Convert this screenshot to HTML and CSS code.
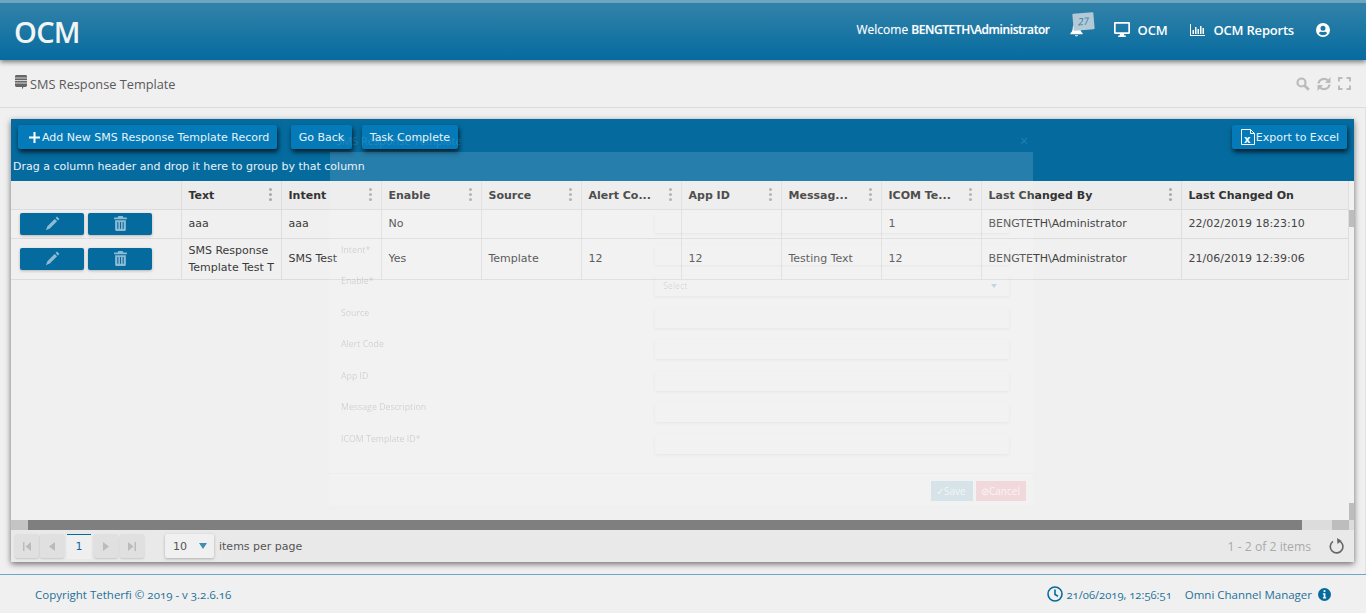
FILE: index.html
```html
<!DOCTYPE html>
<html lang="en">
<head>
<meta charset="utf-8">
<title>SMS Response Template</title>
<link rel="stylesheet" href="styles.css">
</head>
<body>
<div class="page">
  <header class="topbar">
    <div class="logo">OCM</div>
    <nav class="topnav">
      <span class="welcome">Welcome <b>BENGTETH\Administrator</b></span>
      <span class="bell">
        <svg class="bell-icon" viewBox="0 0 16 16" width="15" height="15"><path fill="#fff" d="M8 1c-.6 0-1 .4-1 1C4.800 2.500 4 4.300 4 6c0 3-1 4.500-2.500 5.700V13h13v-1.300C13 10.500 12 9 12 6c0-1.700-.8-3.500-3-4 0-.6-.4-1-1-1zM6.300 14c.2.800.9 1.300 1.700 1.300s1.500-.5 1.700-1.300z"/></svg>
        <span class="badge">27</span>
      </span>
      <a class="navlink"><svg viewBox="0 0 16 15" width="16" height="15"><path fill="#fff" fill-rule="evenodd" d="M1.200 0h13.600c.7 0 1.200.5 1.200 1.200v9.600c0 .7-.5 1.200-1.200 1.200H10l.4 1.600h1.400V15H4.200v-1.400h1.400L6 12H1.200C.5 12 0 11.500 0 10.800V1.200C0 .5.500 0 1.200 0zM1.700 1.700v8.600h12.600V1.700z"/></svg><span>OCM</span></a>
      <a class="navlink"><svg viewBox="0 0 15 12" width="15" height="12"><path fill="#fff" d="M0 0h1v11h14v1H0zM2.500 6h1.500v4H2.500zM5 3h1.500v7H5zM7.500 5H9v5H7.500zM10 2h1.500v8H10zM12.500 4H14v6h-1.500z"/></svg><span>OCM Reports</span></a>
      <svg class="user" viewBox="0 0 14 14" width="14" height="14"><path fill="#fff" fill-rule="evenodd" d="M7 0a7 7 0 1 0 0 14A7 7 0 0 0 7 0zm0 2.800a2.500 2.500 0 1 1 0 5 2.500 2.500 0 0 1 0-5zM7 12.300c-1.700 0-3.200-.8-4.100-2 .4-1 1.400-1.500 2.300-1.500.6.200 1.200.3 1.800.3s1.200-.1 1.800-.3c.9 0 1.900.5 2.300 1.500-.9 1.200-2.400 2-4.100 2z"/></svg>
    </nav>
  </header>

  <section class="titlebar">
    <h1 class="page-title">
      <svg viewBox="0 0 12 15" width="12" height="15"><path fill="#666" d="M1.500 0h9c.8 0 1.500.6 1.500 1.400v9.200c0 .8-.7 1.400-1.500 1.400H8.500L7 14.500V12H1.500C.7 12 0 11.400 0 10.600V1.400C0 .6.700 0 1.500 0z"/><path stroke="#f0f0f0" stroke-width=".8" d="M0 3h12M0 5.500h12M0 8h12"/></svg>
      SMS Response Template
    </h1>
    <div class="tools">
      <svg viewBox="0 0 14 14" width="14" height="14"><circle cx="5.500" cy="5.500" r="4" fill="none" stroke="#bbb" stroke-width="2.200"/><path d="M8.500 8.500l4.300 4.300" stroke="#bbb" stroke-width="2.800"/></svg>
      <svg viewBox="0 0 14 14" width="14" height="14"><path fill="none" stroke="#bbb" stroke-width="2.200" d="M1.500 6.500A5.500 5 0 0 1 11 3.500M12.500 7.500A5.500 5 0 0 1 3 10.500"/><path fill="#bbb" d="M13.500 0v6H8zM.5 14V8H6z"/></svg>
      <svg viewBox="0 0 13 13" width="13" height="13"><path fill="none" stroke="#bbb" stroke-width="2" d="M1 4.500V1h3.500M8.500 1H12v3.500M12 8.500V12H8.500M4.500 12H1V8.500"/></svg>
    </div>
  </section>

  <main class="content">
    <div class="panel">
      <div class="toolbar">
        <div class="toolbar-row">
          <div class="btn-group">
            <button class="tbtn tbtn-add"><svg viewBox="0 0 11 11" width="11" height="11"><path fill="#fff" d="M4.500 0h2v4.500H11v2H6.500V11h-2V6.500H0v-2h4.500z"/></svg>Add New SMS Response Template Record</button>
            <button class="tbtn tbtn-back">Go Back</button>
            <button class="tbtn">Task Complete</button>
          </div>
          <button class="tbtn tbtn-export"><svg viewBox="0 0 14 16" width="14" height="16"><path fill="none" stroke="#fff" stroke-width="1" d="M.5.500h9l4 4v11H.5z"/><path fill="none" stroke="#fff" d="M9.500.5v4h4"/><text x="3" y="14" class="xl">x</text></svg>Export to Excel</button>
        </div>
        <div class="grouping">Drag a column header and drop it here to group by that column</div>
      </div>

      <div class="grid-wrap">
        <table class="grid">
          <colgroup>
            <col class="c-act"><col class="c-n"><col class="c-n"><col class="c-n"><col class="c-n"><col class="c-n"><col class="c-n"><col class="c-n"><col class="c-n"><col class="c-by"><col>
          </colgroup>
          <thead>
            <tr>
              <th></th>
              <th>Text<i class="dots"></i></th>
              <th>Intent<i class="dots"></i></th>
              <th>Enable<i class="dots"></i></th>
              <th>Source<i class="dots"></i></th>
              <th>Alert Co...<i class="dots"></i></th>
              <th>App ID<i class="dots"></i></th>
              <th>Messag...<i class="dots"></i></th>
              <th>ICOM Te...<i class="dots"></i></th>
              <th>Last Changed By<i class="dots"></i></th>
              <th>Last Changed On</th>
            </tr>
          </thead>
          <tbody>
            <tr class="r1">
              <td class="acts"><div class="act-wrap"><button class="act"><svg viewBox="0 0 15 15" width="15" height="15"><path fill="#8dbbd4" d="M12 .6l2.400 2.400-1.400 1.400-2.400-2.400zM9.700 2.900l2.400 2.400-7.300 7.300L.8 14.200l1.600-4z"/></svg></button><button class="act"><svg viewBox="0 0 12 14" width="13" height="15"><path fill="#8dbbd4" fill-rule="evenodd" d="M4 0h4l.7 1.500H12V3H0V1.500h3.300zM1 4h10v8.500c0 .8-.6 1.500-1.300 1.500H2.300C1.600 14 1 13.300 1 12.500zM3 5.500V12h1V5.500zm2.500 0V12h1V5.500zm2.500 0V12h1V5.500z"/></svg></button></div></td>
              <td>aaa</td><td>aaa</td><td class="muted">No</td><td></td><td></td><td></td><td></td><td class="muted">1</td><td class="muted">BENGTETH\Administrator</td><td class="muted">22/02/2019 18:23:10</td>
            </tr>
            <tr class="r2">
              <td class="acts"><div class="act-wrap"><button class="act"><svg viewBox="0 0 15 15" width="15" height="15"><path fill="#8dbbd4" d="M12 .6l2.400 2.400-1.400 1.400-2.400-2.400zM9.700 2.900l2.400 2.400-7.300 7.300L.8 14.200l1.600-4z"/></svg></button><button class="act"><svg viewBox="0 0 12 14" width="13" height="15"><path fill="#8dbbd4" fill-rule="evenodd" d="M4 0h4l.7 1.500H12V3H0V1.500h3.300zM1 4h10v8.500c0 .8-.6 1.500-1.300 1.500H2.300C1.600 14 1 13.300 1 12.500zM3 5.500V12h1V5.500zm2.500 0V12h1V5.500zm2.500 0V12h1V5.500z"/></svg></button></div></td>
              <td class="wrap">SMS Response Template Test T</td><td>SMS Test</td><td class="muted">Yes</td><td class="muted">Template</td><td class="muted">12</td><td class="muted">12</td><td class="muted">Testing Text</td><td class="muted">12</td><td class="muted">BENGTETH\Administrator</td><td class="muted">21/06/2019 12:39:06</td>
            </tr>
          </tbody>
        </table>
        <div class="vscroll"><span class="vthumb"></span><span class="vthumb"></span></div>
      </div>

      <div class="hscroll"><span class="hleft"></span><span class="hthumb"></span><span class="hrest"></span><span class="hcorner"></span></div>

      <div class="pager">
        <div class="pager-left">
          <button class="pg"><svg viewBox="0 0 8 9" width="8" height="9"><path fill="#bbb" d="M0 0h1.500v9H0zM8 0v9L2.500 4.500z"/></svg></button>
          <button class="pg"><svg viewBox="0 0 6 9" width="6" height="9"><path fill="#bbb" d="M6 0v9L0 4.500z"/></svg></button>
          <span class="pg-cur">1</span>
          <button class="pg"><svg viewBox="0 0 6 9" width="6" height="9"><path fill="#bbb" d="M0 0v9l6-4.500z"/></svg></button>
          <button class="pg"><svg viewBox="0 0 8 9" width="8" height="9"><path fill="#bbb" d="M6.500 0H8v9H6.500zM0 0v9l5.500-4.500z"/></svg></button>
          <span class="size-sel"><span>10</span><i class="caret"></i></span>
          <span class="ipp">items per page</span>
        </div>
        <div class="pager-right">
          <span class="count">1 - 2 of 2 items</span>
          <svg viewBox="0 0 16 16" width="16" height="16"><path fill="none" stroke="#666" stroke-width="1.600" d="M9.800 2.700A6.300 6.300 0 1 1 4 3.400"/><path fill="#666" d="M8 0l4.500 2.800L8.500 6z"/></svg>
        </div>
      </div>
    </div>
  </main>

  <footer class="footer">
    <span class="copy">Copyright Tetherfi © 2019 - v 3.2.6.16</span>
    <div class="foot-right">
      <svg viewBox="0 0 16 16" width="16" height="16"><circle cx="8" cy="8" r="7" fill="none" stroke="#056b9f" stroke-width="1.600"/><path fill="none" stroke="#056b9f" stroke-width="1.600" d="M8 3.500V8.500l3 1.800"/></svg>
      <span class="clock">21/06/2019, 12:56:51</span>
      <span class="product">Omni Channel Manager</span>
      <svg viewBox="0 0 13 13" width="13" height="13"><circle cx="6.500" cy="6.500" r="6.500" fill="#056b9f"/><path fill="#fff" d="M5.600 2.300h1.800v1.800H5.600zM4.900 5.300h2.500v4h.8v1.300H4.900V9.300h.8V6.600h-.8z"/></svg>
    </div>
  </footer>

  <div class="modal-ghost" aria-hidden="true">
    <div class="ghost-head"><span>SMS Response Template</span><span>×</span></div>
    <div class="ghost-body">
      <div class="ghost-form">
        <div class="ghost-row"><label></label><span class="ghost-input"></span></div>
        <div class="ghost-row"><label>Intent*</label><span class="ghost-input"></span></div>
        <div class="ghost-row"><label>Enable*</label><span class="ghost-input ghost-sel">Select<i></i></span></div>
        <div class="ghost-row"><label>Source</label><span class="ghost-input"></span></div>
        <div class="ghost-row"><label>Alert Code</label><span class="ghost-input"></span></div>
        <div class="ghost-row"><label>App ID</label><span class="ghost-input"></span></div>
        <div class="ghost-row"><label>Message Description</label><span class="ghost-input"></span></div>
        <div class="ghost-row"><label>ICOM Template ID*</label><span class="ghost-input"></span></div>
      </div>
      <div class="ghost-foot">
        <span class="ghost-btn ghost-save">✓Save</span>
        <span class="ghost-btn ghost-cancel">⊘Cancel</span>
      </div>
    </div>
  </div>
</div>
</body>
</html>
```

FILE: styles.css
```css
* { box-sizing: border-box; }
html, body { margin: 0; height: 100%; }
body { background: #f0f0f0; font-family: "DejaVu Sans", sans-serif; overflow: hidden; }
.page { position: relative; width: 1366px; height: 613px; display: flex; flex-direction: column; }

.topbar {
  height: 60px; flex: none; display: flex; justify-content: space-between; align-items: center;
  background: linear-gradient(#2f81a8 3px, #2f81a8 4px, #056b9f 100%);
  border-top: 3px solid #6ea5c1;
  box-shadow: 0 2px 5px rgba(0,0,0,.5);
  color: #fff; position: relative; z-index: 2;
  font-family: "Open Sans", sans-serif;
}
.logo { font-size: 29px; font-weight: 600; margin-left: 14px; letter-spacing: -.7px; line-height: 1; margin-top: -1px; color: #f2f4f5; }
.topnav { display: flex; align-items: center; margin-right: 36px; margin-top: -4px; }
.welcome { font-size: 12px; margin-right: 19px; text-shadow: 0 0 1px rgba(255,255,255,.4); }
.welcome b { font-weight: 600; letter-spacing: -.43px; }
.bell { position: relative; width: 25px; height: 30px; margin-right: 20px; }
.bell-icon { position: absolute; left: 0; top: 7px; }
.badge {
  position: absolute; left: 4px; top: -2px; width: 21px; height: 17px; background: #b3c9d5; color: #2a7ba5;
  font-size: 10px; line-height: 16px; text-align: center; transform: rotate(-5deg); border-radius: 1px; font-style: italic;
}
.navlink { display: flex; align-items: center; font-size: 13px; font-weight: 600; margin-right: 23px; letter-spacing: -.2px; }
.navlink + .navlink { margin-right: 21px; }
.navlink svg { margin-right: 8px; }
.user { margin-left: 1px; }

.titlebar {
  height: 48px; flex: none; display: flex; justify-content: space-between; align-items: center;
  border-bottom: 1px solid #dcdcdc; padding: 0 15px 0 15px;
}
.page-title { margin: 0; font: 400 12.750px "Open Sans", sans-serif; color: #5a5a5a; display: flex; align-items: center; gap: 3px; }
.page-title svg { margin-top: -2px; }
.tools { display: flex; gap: 7px; align-items: center; }

.content { flex: none; padding: 11px 11px 12px 11px; height: 466px; border-right: 1px solid #e2e2e2; }
.panel { height: 443px; display: flex; flex-direction: column; box-shadow: 0 2px 6px rgba(0,0,0,.55); background: #f0f0f0; }

.toolbar { height: 62px; flex: none; background: #056b9f; padding: 6px 7px 0 2px; }
.toolbar-row { display: flex; justify-content: space-between; padding-left: 5px; }
.btn-group { display: flex; }
.tbtn {
  height: 24px; border: 0; border-radius: 2px; background: #047ab8; color: #e8f2f7; display: inline-flex; align-items: center;
  font: 11px "DejaVu Sans", sans-serif; padding: 0 8px; margin-right: 5px;
  box-shadow: 1px 3px 5px rgba(0,0,0,.75);
}
.tbtn-add { padding: 0 8px 0 11px; margin-right: 14px; }
.tbtn-add svg { margin-right: 2px; }
.tbtn-back { margin-right: 10px; padding: 0 7.500px; }
.tbtn-export { margin-right: 0; padding: 0 8px 0 9px; }
.tbtn-export svg { margin-right: 1px; }
.xl { font: 700 10px "DejaVu Sans", sans-serif; fill: #fff; }
.grouping { font-size: 11px; color: #e8f2f7; margin-top: 10px; line-height: 16px; }

.grid-wrap { flex: 1; display: flex; min-height: 0; }
.grid { width: 1338px; flex: none; table-layout: fixed; border-collapse: collapse; font-size: 11px; color: #3a3a3a; align-self: flex-start; }
.c-act { width: 170px; }
.c-n { width: 100px; }
.c-by { width: 200px; }
.grid th {
  height: 28px; position: relative; text-align: left; font-weight: 700; color: #333; background: #ececec;
  padding: 2px 7px 0; border-right: 1px solid #dedede; border-bottom: 1px solid #dcdcdc; white-space: nowrap; overflow: hidden;
  font-size: 11px;
}
.grid td { padding: 0 7px; border-right: 1px solid #dedede; border-bottom: 1px solid #dcdcdc; vertical-align: middle; line-height: 17px; }
.grid .muted { color: #444; }
.grid .wrap { padding-right: 2px; }
.r1 td { height: 29px; }
.r2 td { height: 41px; }
.dots { position: absolute; right: 9px; top: 7px; width: 3px; height: 3px; border-radius: 50%; background: #aaa; box-shadow: 0 5px 0 #aaa, 0 10px 0 #aaa; }
.grid td.acts { padding: 0 0 0 9px; }
.act-wrap { display: flex; gap: 4px; }
.act { width: 64px; height: 22px; border: 0; border-radius: 2px; background: #056b9f; display: flex; align-items: center; justify-content: center; padding: 0; box-shadow: 0 1px 3px rgba(0,0,0,.25); }

.vscroll { width: 5px; background: #f1f1f1; padding-top: 29px; display: flex; flex-direction: column; justify-content: space-between; }
.vthumb { display: block; width: 5px; height: 17px; background: #bdbdbd; }

.hscroll { height: 10px; flex: none; display: flex; background: #dcdcdc; }
.hleft { width: 17px; background: #c4c4c4; }
.hthumb { width: 1274px; background: #7f7f7f; }
.hrest { flex: 1; background: #dcdcdc; }
.hcorner { width: 17px; background: #bdbdbd; margin-right: 5px; }

.pager { height: 32px; flex: none; display: flex; justify-content: space-between; align-items: center; background: #e9e9e9; padding: 0 9px 0 4px; font-size: 11px; color: #555; }
.pager-left, .pager-right { display: flex; align-items: center; }
.pg { width: 24px; height: 24px; border: 0; margin-right: 1px; background: #e0e0e0; display: flex; align-items: center; justify-content: center; padding: 0; border-radius: 2px; box-shadow: 0 1px 2px rgba(0,0,0,.15); }
.pg-cur + .pg { margin-right: 2px; }
.pg-cur { width: 24px; height: 25px; margin: 0 3px 0 2px; display: flex; align-items: center; justify-content: center; border-top: 1px solid #056b9f; background: #efefef; color: #056b9f; }
.size-sel { width: 49px; height: 24px; margin: 0 5px 0 20px; display: flex; align-items: center; justify-content: space-between; padding: 0 5px 0 8px; background: #f0f0f0; border-radius: 2px; box-shadow: 0 1px 3px rgba(0,0,0,.25); color: #555; }
.caret { width: 0; height: 0; border-left: 4px solid transparent; border-right: 4px solid transparent; border-top: 6px solid #3d8db5; margin-right: 2px; }
.count { color: #aaa; margin-right: 18px; font-family: "Open Sans", sans-serif; font-size: 12.200px; }

.footer {
  flex: 1; border-top: 1px solid #6aa9c7; display: flex; justify-content: space-between; align-items: center;
  padding: 0 35px; font: 11.500px "Open Sans", sans-serif; color: #1f7099;
}
.copy, .clock { font-variant-numeric: oldstyle-nums; }
.foot-right { display: flex; align-items: center; }
.clock { margin: 0 13px 0 4px; font-size: 11.200px; }
.product { margin-right: 6px; }

.modal-ghost { position: absolute; left: 330px; top: 119px; width: 703px; height: 386px; display: flex; flex-direction: column; font: 8.800px "Open Sans", sans-serif; pointer-events: none; }
.ghost-head { height: 33px; flex: none; display: flex; justify-content: space-between; padding: 16px 6px 0 6px; color: rgba(255,255,255,.12); font-size: 11px; line-height: 12px; }
.ghost-head span:last-child { margin-right: -1px; color: rgba(255,255,255,.15); font-size: 14px; }
.ghost-body { flex: 1; background: rgba(255,255,255,.13); display: flex; flex-direction: column; }
.ghost-form { flex: 1; padding: 61px 24px 0 11px; display: flex; flex-direction: column; gap: 11.500px; }
.ghost-row { display: flex; justify-content: space-between; height: 20px; }
.ghost-row label { color: rgba(0,0,0,.14); margin-top: -1px; filter: blur(.3px); }
.ghost-input { width: 354px; height: 20px; background: rgba(255,255,255,.04); box-shadow: 0 1px 3px rgba(0,0,0,.05); color: rgba(0,0,0,.13); padding: 4px 8px; display: flex; justify-content: space-between; line-height: 12px; }
.ghost-sel i { width: 0; height: 0; border-left: 3px solid transparent; border-right: 3px solid transparent; border-top: 4px solid rgba(5,107,159,.2); margin: 4px 4px 0 0; }
.ghost-foot { height: 32px; flex: none; border-top: 1px solid rgba(0,0,0,.02); display: flex; justify-content: flex-end; gap: 3px; padding: 7px 7px 0 0; }
.ghost-btn { height: 20px; padding: 0 5px; font-size: 10px; line-height: 20px; color: rgba(255,255,255,.7); }
.ghost-save { background: #d6e3e9; width: 42px; }
.ghost-cancel { background: #f1d9db; width: 50px; }
```
